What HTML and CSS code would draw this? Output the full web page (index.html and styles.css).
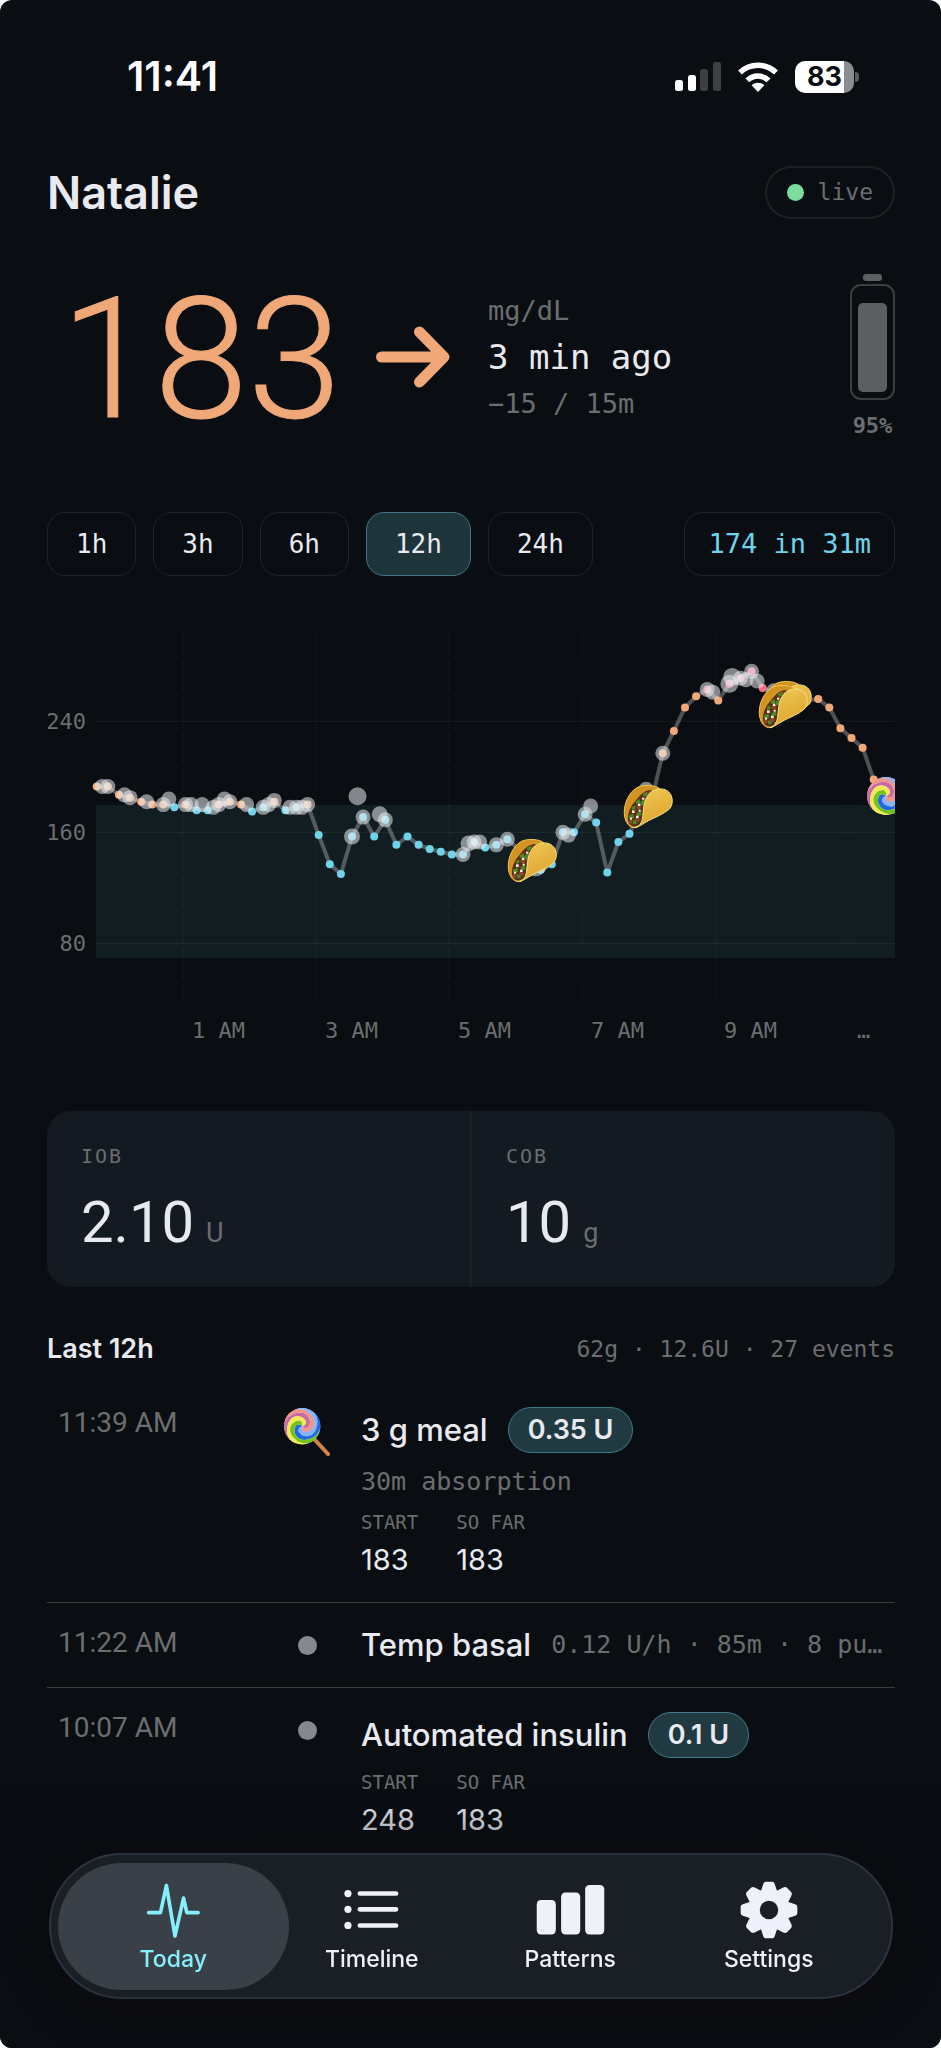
FILE: index.html
```html
<!DOCTYPE html>
<html lang="en">
<head>
  <meta charset="UTF-8">
  <meta name="viewport" content="width=device-width, initial-scale=1.0">
  <title>Natalie - Today</title>
  <link rel="stylesheet" href="styles.css">
</head>
<body>
  <!-- shared symbols -->
  <svg class="defs" width="0" height="0" aria-hidden="true">
    <defs>
      <linearGradient id="shell" x1="0" y1="0" x2="0.4" y2="1">
        <stop offset="0" stop-color="#efcb55"/>
        <stop offset="1" stop-color="#dea42f"/>
      </linearGradient>
      <clipPath id="candy"><circle r="19"/></clipPath>
      <symbol id="taco" viewBox="-3 -3 153 138">
        <path fill="#d39322" stroke="#f1c650" stroke-width="3" d="M1 78C2 45 22 14 45 5C65-1 90 0 106 10L60 70 40 126C25 132 12 122 6 108C2 98 0 88 1 78Z"/>
        <path fill="#5a3216" d="M12 104C10 84 22 60 36 46C46 34 56 20 74 16C84 14 90 20 84 28C70 38 60 54 57 80C55 100 50 120 36 124C22 126 13 116 12 104Z"/>
        <g fill="#4f8a2a">
          <path d="M34 50l12-8 4 12-12 4z"/><path d="M56 26l14-6 2 10-12 6z"/><path d="M14 92l14-6 2 12-12 6z"/>
          <path d="M38 84l12-6 2 12-12 4z"/><path d="M50 50l12-8-2 16-8 4z"/><path d="M26 108l10-4 2 12-10 2z"/><path d="M24 66l10-4 0 10-10 2z"/>
        </g>
        <g fill="#8a4b25"><circle cx="76" cy="26" r="7"/><circle cx="44" cy="66" r="7"/><circle cx="20" cy="110" r="6"/><circle cx="40" cy="104" r="7"/></g>
        <g fill="#f4efe4">
          <rect x="24" y="76" width="8" height="8"/><rect x="42" y="56" width="7" height="7"/><rect x="36" y="92" width="8" height="7"/>
          <rect x="54" y="38" width="7" height="6"/><rect x="18" y="98" width="6" height="6"/><rect x="44" y="74" width="6" height="6"/>
        </g>
        <path fill="url(#shell)" stroke="#f7df83" stroke-width="3" d="M32 128C45 125 55 118 75 106C95 96 118 88 136 72C144 64 147 48 143 36C138 18 122 10 104 12C80 14 64 36 60 60C56 85 58 105 48 118C44 124 38 128 32 128Z"/>
      </symbol>
      <path id="arm" d="M0 0C2 0 5.4-3.3 3.5-6.1C1.3-9.4-2.3-10.9-6-10.4C-12.4-9.5-15.1-3.4-15.8 2.8C-16.8 11-11 17-3.6 20.7Q-16 19-19.7 7.2C-20.2-1-17.9-9-10.3-12.3C-4.6-14.8 2-15.5 6-10.4C8.3-7.4 8.8-3.6 7 0C5.6 3 1 1.7 0 0Z"/>
      <symbol id="lollipop" viewBox="-20 -20 50 52">
        <path d="M13 14L27 29" stroke="#d08448" stroke-width="4" stroke-linecap="round"/>
        <g clip-path="url(#candy)">
          <circle r="19" fill="#f6f2f0"/>
          <use href="#arm" fill="#c76aa6"/>
          <use href="#arm" fill="#f0958a" transform="rotate(60)"/>
          <use href="#arm" fill="#86b2f8" transform="rotate(120)"/>
          <use href="#arm" fill="#2468e6" transform="rotate(180)"/>
          <use href="#arm" fill="#74c41c" transform="rotate(240)"/>
          <use href="#arm" fill="#f2ea55" transform="rotate(300)"/>
        </g>
      </symbol>
    </defs>
  </svg>

  <div class="status-bar">
    <span class="clock">11:41</span>
    <div class="status-icons">
      <svg width="46" height="31" viewBox="0 0 46 31" aria-label="Signal">
        <rect x="0" y="19" width="8" height="11" rx="2.5" fill="#fff"/>
        <rect x="13" y="14" width="8" height="16" rx="2.5" fill="#fff"/>
        <rect x="25" y="8" width="8" height="22" rx="2.5" fill="#3c3e42"/>
        <rect x="38" y="1" width="8" height="29" rx="2.5" fill="#3c3e42"/>
      </svg>
      <svg width="40" height="30" viewBox="0 0 40 30" fill="none" stroke="#fff" stroke-width="5.5" aria-label="Wi-Fi">
        <path d="M2 10.6A26 26 0 0 1 38 10.6"/>
        <path d="M9.4 18.4A15 15 0 0 1 30.6 18.4"/>
        <path fill="#fff" stroke="none" d="M20 30L13.6 23.2A9.5 9.5 0 0 1 26.4 23.2Z"/>
      </svg>
      <span class="phone-battery">83</span>
    </div>
  </div>

  <main>
    <header class="top">
      <h1>Natalie</h1>
      <span class="live"><i class="live-dot"></i>live</span>
    </header>

    <section class="hero">
      <span class="glucose">183</span>
      <svg class="trend" width="74" height="62" viewBox="0 0 74 62" aria-label="Flat">
        <path d="M5.5 31H66M43.5 6L68 31L43.5 56" fill="none" stroke="#f0a878" stroke-width="11" stroke-linecap="round" stroke-linejoin="round"/>
      </svg>
      <div class="reading">
        <span>mg/dL</span>
        <span class="age">3 min ago</span>
        <span>−15 / 15m</span>
      </div>
      <div class="pump">
        <span class="pump-cap"></span>
        <span class="pump-body"><span class="pump-fill"></span></span>
        <span class="pump-level">95%</span>
      </div>
    </section>

    <div class="ranges">
      <button type="button">1h</button>
      <button type="button">3h</button>
      <button type="button">6h</button>
      <button type="button" class="active">12h</button>
      <button type="button">24h</button>
      <button type="button" class="forecast">174 in 31m</button>
    </div>

    <svg class="chart" id="chart" viewBox="0 0 848 440" role="img" aria-label="Glucose, last 12 hours">
      <rect class="target" x="49" y="185" width="799" height="153"/>
      <g id="grid"></g>
      <polyline class="trace" id="trace"/>
      <g id="readings"></g>
      <g class="doses" id="doses"></g>
      <use href="#taco" x="460" y="218" width="51" height="46"/>
      <use href="#taco" x="576" y="164" width="51" height="46"/>
      <use href="#taco" x="715" y="60" width="51" height="46"/>
      <use href="#taco" x="711" y="64" width="51" height="46"/>
      <use href="#lollipop" x="819" y="156" width="50" height="52"/>
    </svg>

    <section class="stats">
      <div class="stat">
        <span class="stat-label">IOB</span>
        <span class="stat-value">2.10<small>U</small></span>
      </div>
      <div class="stat">
        <span class="stat-label">COB</span>
        <span class="stat-value">10<small>g</small></span>
      </div>
    </section>

    <section class="log">
      <div class="log-head">
        <h2>Last 12h</h2>
        <span>62g · 12.6U · 27 events</span>
      </div>

      <article class="event">
        <time>11:39 AM</time>
        <div class="marker"><svg width="48" height="50"><use href="#lollipop"/></svg></div>
        <div class="details">
          <div class="title tall"><h3>3 g meal</h3><span class="badge">0.35 U</span></div>
          <p class="sub">30m absorption</p>
          <dl>
            <div><dt>START</dt><dd>183</dd></div>
            <div><dt>SO FAR</dt><dd>183</dd></div>
          </dl>
        </div>
      </article>

      <article class="event">
        <time>11:22 AM</time>
        <div class="marker"><i class="dot"></i></div>
        <div class="details">
          <div class="title"><h3>Temp basal</h3><span class="meta">0.12 U/h · 85m · 8 pu…</span></div>
        </div>
      </article>

      <article class="event">
        <time>10:07 AM</time>
        <div class="marker"><i class="dot"></i></div>
        <div class="details">
          <div class="title tall"><h3>Automated insulin</h3><span class="badge">0.1 U</span></div>
          <dl>
            <div><dt>START</dt><dd>248</dd></div>
            <div><dt>SO FAR</dt><dd>183</dd></div>
          </dl>
        </div>
      </article>
    </section>
  </main>

  <div class="fade"></div>
  <nav class="tabs">
    <a href="#today" class="active">
      <svg width="58" height="58" viewBox="0 0 176 176" fill="none" stroke="currentColor" stroke-width="11" stroke-linecap="round" stroke-linejoin="round">
        <path d="M14 96H50L68 14L94 167L120 52L130 96H164"/>
      </svg>
      <span>Today</span>
    </a>
    <a href="#timeline">
      <svg width="58" height="58" viewBox="0 0 176 176" fill="currentColor">
        <circle cx="15" cy="38" r="11"/><circle cx="15" cy="86" r="11"/><circle cx="15" cy="135" r="11"/>
        <path d="M51 38H161M51 86H161M51 135H161" stroke="currentColor" stroke-width="14" stroke-linecap="round"/>
      </svg>
      <span>Timeline</span>
    </a>
    <a href="#patterns">
      <svg width="70" height="58" viewBox="0 0 210 176" fill="currentColor">
        <rect x="4" y="58" width="58" height="104" rx="13"/>
        <rect x="78" y="35" width="58" height="127" rx="13"/>
        <rect x="151" y="12" width="58" height="150" rx="13"/>
      </svg>
      <span>Patterns</span>
    </a>
    <a href="#settings">
      <svg width="58" height="58" viewBox="-88 -88 176 176" fill="currentColor">
        <defs><path id="tooth" d="M-27-50L-18-77Q-16-86-9-86H9Q16-86 18-77L27-50Z"/></defs>
        <use href="#tooth"/><use href="#tooth" transform="rotate(45)"/><use href="#tooth" transform="rotate(90)"/><use href="#tooth" transform="rotate(135)"/>
        <use href="#tooth" transform="rotate(180)"/><use href="#tooth" transform="rotate(225)"/><use href="#tooth" transform="rotate(270)"/><use href="#tooth" transform="rotate(315)"/>
        <circle r="61"/>
        <circle class="gear-hole" r="28"/>
      </svg>
      <span>Settings</span>
    </a>
  </nav>

  <script src="chart.js"></script>
</body>
</html>
```
FILE: styles.css
```css
* {
  box-sizing: border-box;
}

html {
  background: #fff;
}

body {
  margin: 0;
  min-height: 100vh;
  background: #0a0d12;
  color: #e8eaf0;
  border-radius: 12px;
  font-family: Inter, "Liberation Sans", sans-serif;
}

h1, h2, h3, p, dl, dd {
  margin: 0;
}

.defs {
  position: absolute;
}

.live, .reading, .pump-level, .ranges button, .stat-label,
.log-head span, .sub, .meta, dt, .chart text {
  font-family: "DejaVu Sans Mono", "Liberation Mono", monospace;
}

/* even-width digits */
.glucose, .stat-value, time {
  font-family: Roboto, Inter, sans-serif;
}

/* Status bar */
.status-bar {
  display: flex;
  justify-content: space-between;
  align-items: center;
  padding: 56px 82px 0 127px;
  color: #fff;
}

.clock {
  font-size: 41px;
  line-height: 41px;
  font-weight: 600;
}

.status-icons {
  display: flex;
  align-items: center;
  gap: 17px;
}

.phone-battery {
  position: relative;
  width: 59px;
  height: 32px;
  margin-right: 5px;
  border-radius: 10px;
  background: linear-gradient(90deg, #fff 83%, #8b8d90 83%);
  color: #0a0d12;
  font-size: 27px;
  line-height: 32px;
  font-weight: 700;
  text-align: center;
}

.phone-battery::after {
  content: "";
  position: absolute;
  left: 60px;
  top: 11px;
  width: 4px;
  height: 10px;
  border-radius: 0 4px 4px 0;
  background: #5c5e61;
}

/* Header */
main {
  padding: 69px 46px 0 47px;
}

.top {
  display: flex;
  justify-content: space-between;
  align-items: center;
}

h1 {
  font-size: 45px;
  line-height: 52px;
  font-weight: 600;
}

.live {
  display: flex;
  align-items: center;
  gap: 14px;
  padding: 0 20px;
  border: 2px solid #1d2024;
  border-radius: 27px;
  color: #6b6d70;
  font-size: 23px;
  line-height: 49px;
}

.live-dot {
  width: 17px;
  height: 17px;
  border-radius: 50%;
  background: #7cdc9e;
}

/* Current reading */
.hero {
  display: flex;
  align-items: center;
  margin-top: 55px;
  height: 166px;
}

.glucose {
  min-width: 308px;
  padding-top: 4px;
  color: #f0a878;
  font-size: 169px;
  line-height: 166px;
  font-weight: 300;
  text-align: center;
  -webkit-text-stroke: 1px #f0a878;
}

.trend {
  margin: 0 38px 0 21px;
}

.reading {
  display: flex;
  flex-direction: column;
  gap: 6px;
  color: #6b6d70;
  font-size: 27px;
  line-height: 36px;
}

.age {
  color: #e8eaf0;
  font-size: 34px;
  line-height: 45px;
}

.pump {
  display: flex;
  flex-direction: column;
  align-items: center;
  margin-left: auto;
}

.pump-cap {
  width: 19px;
  height: 7px;
  border-radius: 3px;
  background: #5c5e61;
}

.pump-body {
  display: flex;
  align-items: flex-end;
  width: 45px;
  height: 116px;
  margin-top: 3px;
  padding: 6px;
  border: 2px solid #3c3e42;
  border-radius: 11px;
}

.pump-fill {
  width: 100%;
  height: 89px;
  border-radius: 5px;
  background: #5c5f62;
}

.pump-level {
  margin-top: 12px;
  color: #6b6d70;
  font-size: 22px;
  line-height: 28px;
  font-weight: 700;
}

/* Range picker */
.ranges {
  display: flex;
  gap: 17px;
  margin-top: 72px;
}

.ranges button {
  padding: 0 28px;
  border: 1px solid #202327;
  border-radius: 18px;
  background: transparent;
  color: #e8eaf0;
  font-size: 26px;
  line-height: 62px;
}

.ranges .active {
  border-color: #3f7685;
  background: #1e343b;
}

.ranges .forecast {
  margin-left: auto;
  padding: 0 23px;
  color: #6fd3ea;
  font-size: 27px;
}

/* Chart */
.chart {
  display: block;
  width: 100%;
  margin-top: 44px;
  overflow: hidden;
}

.chart text {
  fill: #6b6d70;
  font-size: 22px;
}

.chart .target {
  fill: #121d22;
}

.chart .row {
  stroke: #fff;
  stroke-opacity: .06;
  stroke-width: 1;
}

.chart .column {
  stroke: #fff;
  stroke-opacity: .05;
  stroke-width: 1;
  stroke-dasharray: 5 4;
}

.chart .trace {
  fill: none;
  stroke: #fff;
  stroke-opacity: .28;
  stroke-width: 4;
  stroke-linejoin: round;
}

.chart .in-range { fill: #6fd3ea; }
.chart .high { fill: #f0a878; }
.chart .very-high { fill: #ee7389; }

.chart .doses {
  fill: #e9ebef;
}

.chart .doses circle {
  fill-opacity: .55;
}

/* IOB / COB */
.stats {
  display: flex;
  margin-top: 51px;
  border-radius: 24px;
  background: #141a21;
}

.stat {
  flex: 1;
  display: flex;
  flex-direction: column;
  gap: 18px;
  padding: 32px 34px 30px;
}

.stat + .stat {
  border-left: 2px solid #1c2127;
}

.stat-label {
  color: #6b6d70;
  font-size: 20px;
  line-height: 26px;
  letter-spacing: 2px;
}

.stat-value {
  font-size: 58px;
  line-height: 70px;
}

.stat-value small {
  margin-left: 12px;
  color: #6b6d70;
  font-size: 27px;
  line-height: 1;
}

/* Event log */
.log-head {
  display: flex;
  justify-content: space-between;
  margin: 46px 0 18px;
  line-height: 32px;
}

h2 {
  font-size: 27px;
  font-weight: 600;
}

.log-head span {
  color: #6b6d70;
  font-size: 23px;
}

.event {
  display: grid;
  grid-template-columns: 236px 78px minmax(0, 1fr);
  padding: 24px 0;
}

.event + .event {
  border-top: 1px solid #3a3c40;
}

time {
  padding-left: 11px;
  color: #6b6d70;
  font-size: 28px;
  line-height: 32px;
}

.marker {
  display: flex;
  justify-content: center;
  width: 48px;
}

.dot {
  width: 19px;
  height: 19px;
  margin-top: 9px;
  border-radius: 50%;
  background: #86888d;
}

.title {
  display: flex;
  align-items: center;
  gap: 20px;
  height: 36px;
}

.title.tall {
  height: 46px;
}

h3 {
  flex: none;
  font-size: 31px;
  line-height: 36px;
  font-weight: 500;
}

.badge {
  padding: 0 19px;
  border: 1px solid #3f7a8a;
  border-radius: 23px;
  background: #213a42;
  font-size: 27px;
  line-height: 44px;
  font-weight: 600;
}

.sub, .meta {
  color: #6b6d70;
  font-size: 25px;
  line-height: 32px;
}

.sub {
  margin-top: 13px;
}

.meta {
  white-space: nowrap;
}

dl {
  display: flex;
  gap: 38px;
  margin-top: 12px;
}

dt {
  color: #6b6d70;
  font-size: 19px;
  line-height: 24px;
}

dd {
  margin-top: 8px;
  font-size: 29px;
  line-height: 36px;
}

/* Tab bar */
.fade {
  position: fixed;
  left: 0;
  right: 0;
  bottom: 0;
  height: 260px;
  border-radius: 0 0 12px 12px;
  background: linear-gradient(rgba(10, 13, 18, 0), #0a0d12 75%);
}

.tabs {
  position: fixed;
  left: 49px;
  right: 48px;
  bottom: 49px;
  display: flex;
  padding: 26px 23px 24px;
  border: 2px solid #2a3440;
  border-radius: 75px;
  background: #1a1e25;
  box-shadow: 0 10px 40px rgba(14, 12, 14, .8);
}

.tabs a {
  position: relative;
  flex: 1;
  display: flex;
  flex-direction: column;
  align-items: center;
  gap: 6px;
  color: #eef1fa;
  font-size: 23px;
  line-height: 28px;
  font-weight: 500;
  text-decoration: none;
}

.tabs svg, .tabs span {
  position: relative;
}

.tabs .active {
  color: #86effc;
}

.tabs .active::before {
  content: "";
  position: absolute;
  inset: -18px -16px -17px;
  border-radius: 64px;
  background: #3a4047;
}

.gear-hole {
  fill: #1a1e25;
}
```
FILE: chart.js
```js
const NS = 'http://www.w3.org/2000/svg';

const readings = [
  193, 193, 187, 185, 182, 180, 180, 178, 180, 176, 176, 180, 182, 180, 175, 178, 182, 176, 178, 180,
  158, 137, 130, 157, 171, 157, 169, 151, 157, 151, 148, 146, 144, 144, 153, 149, 151, 155, 148, 135,
  133, 137, 160, 160, 173, 167, 131, 153, 159, 178, 183, 217, 233, 250, 258, 263, 255, 267, 271, 276,
  264, 260, 255, 248, 255, 256, 250, 235, 228, 221, 198, 186
];

// Insulin deliveries: position (in readings), mg/dL, radius
const doses = [
  [0.5, 193, 7.5], [1, 193, 7.5], [2.5, 187, 7.5], [3, 185, 7.5], [4.5, 182, 7.5], [6, 180, 7.5],
  [6.5, 184, 7.5], [8, 180, 7.5], [8.5, 180, 7.5], [9.5, 180, 7.5], [10.5, 178, 7.5], [11, 180, 7.5],
  [11.5, 184, 7.5], [12, 182, 7.5], [13.5, 180, 7.5], [15, 178, 7.5], [15.5, 180, 7.5], [16, 183, 7.5],
  [17.4, 178, 7.5], [18, 178, 7.5], [18.5, 178, 7.5], [19, 180, 7.5], [23, 157, 8], [23.5, 186, 9],
  [24, 171, 7.5], [25.5, 173, 8], [26, 169, 7.5], [33, 144, 7.5], [33.5, 152, 8], [34, 153, 7.5],
  [34.5, 153, 7.5], [36, 151, 7.5], [37, 155, 7.5], [39.5, 137, 12], [42, 160, 7.5], [42.5, 158, 7.5],
  [44, 173, 7.5], [44.5, 179, 7.5], [49.5, 191, 7.5], [51, 217, 7.5], [55, 263, 7.5], [55.5, 261, 7.5],
  [57, 267, 9], [57.25, 272, 9], [58, 271, 7.5], [58.5, 270, 7.5], [59, 276, 7.5], [59.5, 269, 7.5],
  [61, 262, 7.5]
];

const x = i => 49.7 + i * 11.1;
const y = mg => 101.3 + (240 - mg) * 1.388;

function add(parent, name, attrs, text) {
  const node = document.createElementNS(NS, name);
  for (const key in attrs) node.setAttribute(key, attrs[key]);
  if (text) node.textContent = text;
  document.getElementById(parent).appendChild(node);
}

[240, 160, 80].forEach(mg => {
  add('grid', 'line', { class: 'row', x1: 49, x2: 848, y1: y(mg), y2: y(mg) });
  add('grid', 'text', { x: 39, y: y(mg) + 8, 'text-anchor': 'end' }, String(mg));
});

['1 AM', '3 AM', '5 AM', '7 AM', '9 AM', '…'].forEach((label, i) => {
  const left = 136 + i * 133;
  add('grid', 'line', { class: 'column', x1: left, x2: left, y1: 13, y2: 383 });
  add('grid', 'text', { x: left + 9, y: 418 }, label);
});

document.getElementById('trace').setAttribute('points', readings.map((mg, i) => x(i) + ',' + y(mg)).join(' '));

readings.forEach((mg, i) => {
  const level = mg > 258 ? 'very-high' : mg >= 180 ? 'high' : 'in-range';
  add('readings', 'circle', { class: level, cx: x(i), cy: y(mg), r: 4 });
});

doses.forEach(([i, mg, r]) => add('doses', 'circle', { cx: x(i), cy: y(mg), r: r }));
```
